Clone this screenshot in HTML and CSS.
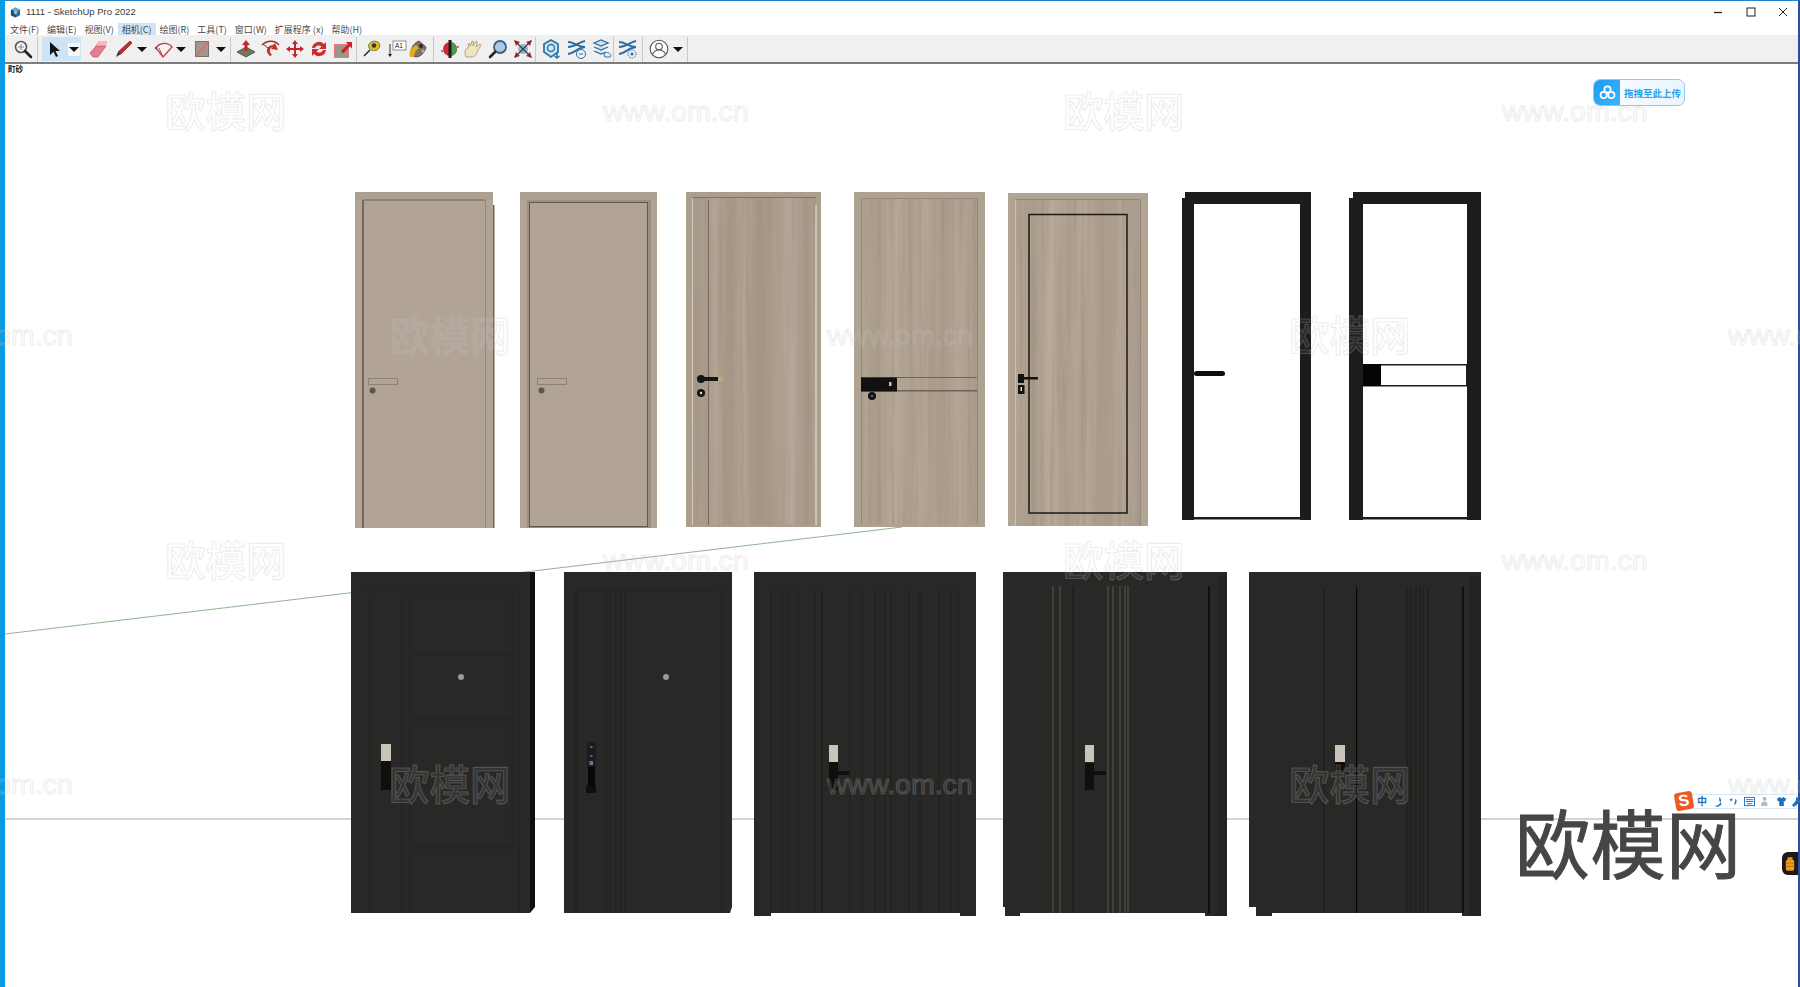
FILE: index.html
```html
<!DOCTYPE html>
<html lang="zh">
<head>
<meta charset="utf-8">
<title>1111 - SketchUp Pro 2022</title>
<link rel="stylesheet" href="styles.css">
</head>
<body>
<div class="window">
  <header class="titlebar">
    <svg class="appicon" viewBox="0 0 12 12"><path d="M6 .5 11 3v6l-5 2.500L1 9V3z" fill="#2f6f9f"/><path d="M6 .5 11 3 6 5.500 1 3z" fill="#6fa8cc"/><path d="M6 5.500V11.500L1 9V3z" fill="#1d4f78"/><circle cx="6" cy="6" r="1.800" fill="#9cc4dd"/></svg>
    <span class="apptitle">1111 - SketchUp Pro 2022</span>
    <div class="winctl">
      <svg class="winbtn" viewBox="0 0 10 10"><path d="M0 5.500h8" stroke="#222" stroke-width="1.300"/></svg>
      <svg class="winbtn" viewBox="0 0 10 10"><rect x="1" y="1" width="8" height="8" fill="none" stroke="#222"/></svg>
      <svg class="winbtn" viewBox="0 0 10 10"><path d="M1 1l8 8M9 1l-8 8" stroke="#222"/></svg>
    </div>
  </header>
  <nav class="menubar">
    <span class="menu">文件(F)</span><span class="menu">编辑(E)</span><span class="menu">视图(V)</span><span class="menu menu-on">相机(C)</span><span class="menu">绘图(R)</span><span class="menu">工具(T)</span><span class="menu">窗口(W)</span><span class="menu">扩展程序 (x)</span><span class="menu">帮助(H)</span>
  </nav>
  <div class="toolbar">
    <svg class="tool ml2" viewBox="0 0 20 20"><circle cx="8" cy="8" r="5.500" fill="#f4f4f4" stroke="#555" stroke-width="1.600"/><path d="M5 8h6M8 5v6" stroke="#888"/><path d="M12 12l6 6" stroke="#222" stroke-width="2.600" stroke-linecap="round"/></svg>
    <i class="sep ml4"></i>
    <div class="selbtn ml4">
      <svg class="tool" viewBox="0 0 20 20"><path d="M6 3v13l3.500-3.200L12 18l2-1-2.500-5H16z" fill="#111"/></svg>
      <span class="caretbox"><i class="caret"></i></span>
    </div>
    <svg class="tool ml8" viewBox="0 0 20 20"><path d="M1 14 10 2h8l-1 5-8 11H4z" fill="#ef8fa0"/><path d="M10 2h8l-1 5H8z" fill="#f7b8c4"/><path d="M1 14 8 7h9L9 18H4z" fill="#e87c92" stroke="#a8586a" stroke-width=".6"/></svg>
    <svg class="tool ml5" viewBox="0 0 20 20"><path d="M16 2l2 2L7 15l-3-2z" fill="#c22b2b" stroke="#7c1c1c" stroke-width=".7"/><path d="M4 13l3 2-5 3z" fill="#333"/></svg>
    <i class="caret ml3"></i>
    <svg class="tool ml7" viewBox="0 0 20 20"><path d="M2 9A10 10 0 0 1 18 8L9 18z" fill="#f8f4f4" stroke="#c23c4a" stroke-width="1.300"/><path d="M5 9 9 18" stroke="#c23c4a"/><circle cx="2" cy="9" r="1.300" fill="#555"/></svg>
    <i class="caret ml2"></i>
    <svg class="tool ml6" viewBox="0 0 20 20"><rect x="3.500" y="2.500" width="13" height="15" fill="#a3978c" stroke="#7e7268"/><path d="M3.500 17.500 16.500 2.500" stroke="#e8606e" stroke-width="1.200"/></svg>
    <i class="caret ml4"></i>
    <i class="sep ml4"></i>
    <svg class="tool ml5" viewBox="0 0 20 20"><path d="M1 13l9-5 9 5-9 5z" fill="#6f7a5e" stroke="#333" stroke-width=".7"/><path d="M10 1l4 5h-2.500v6h-3V6H6z" fill="#c2282e"/></svg>
    <svg class="tool ml5" viewBox="0 0 20 20"><path d="M1 6C6 1 14 1 18 6" fill="none" stroke="#b02a2a" stroke-width="1.500"/><path d="M9 17C4 13 5 7 12 6l2-2 3 7-7-1 2-2C8 9 8 13 11 16z" fill="#c92c2c"/><path d="M2 5l5 4" stroke="#444"/></svg>
    <svg class="tool ml4" viewBox="0 0 20 20"><path d="M10 1l3 4h-2v4h4V7l4 3-4 3v-2h-4v4h2l-3 4-3-4h2v-4H5v2l-4-3 4-3v2h4V5H7z" fill="#c5242c"/></svg>
    <svg class="tool ml4" viewBox="0 0 20 20"><path d="M3 9a7 7 0 0 1 12-4l2-2v7h-7l2.500-2.500A4 4 0 0 0 6 9z" fill="#d02b2e"/><path d="M17 11a7 7 0 0 1-12 4l-2 2v-7h7l-2.500 2.500A4 4 0 0 0 14 11z" fill="#d02b2e"/></svg>
    <svg class="tool ml4" viewBox="0 0 20 20"><rect x="1.500" y="5.500" width="14" height="13" fill="#9a9587" stroke="#e57a84"/><path d="M8 12l7-7-2.500-2H19v6.500l-2-2-7 7z" fill="#c8242c"/></svg>
    <i class="sep ml3"></i>
    <svg class="tool ml5" viewBox="0 0 20 20"><path d="M2 17l6-6" stroke="#222" stroke-width="1.500"/><path d="M7 9a6 5 0 0 1 9-6c3 2 2 6-1 8-3 1-6 1-8-2z" fill="#d9bc2a" stroke="#6a5b10" stroke-width=".7"/><circle cx="12" cy="6.500" r="2.200" fill="#333"/></svg>
    <svg class="tool ml5" viewBox="0 0 20 20"><rect x="6" y="2" width="13" height="9" fill="#fff" stroke="#777" stroke-width=".8"/><text class="a1" x="8" y="9">A1</text><path d="M3 5v12" stroke="#333"/><path d="M1 15h4l-2 3z" fill="#222"/></svg>
    <svg class="tool ml1" viewBox="0 0 20 20"><path d="M4 17C1 12 5 4 11 2l7 6c-1 6-6 10-10 10z" fill="#7d7466" stroke="#3a352c" stroke-width=".7"/><path d="M2 18c-2-5 2-10 6-12l3 3c-3 2-5 6-5 9z" fill="#e5ad1c"/><circle cx="13" cy="7" r="2.200" fill="#3a352c"/><circle cx="15" cy="12" r="1.500" fill="#b7b0a2"/></svg>
    <i class="sep ml5"></i>
    <svg class="tool ml6" viewBox="0 0 20 20"><circle cx="10" cy="10" r="7" fill="#c92c36"/><path d="M10 3a7 7 0 0 1 0 14z" fill="#4d9a4d"/><path d="M10 1v18" stroke="#1d1d1d" stroke-width="3"/><path d="M17 8h2M1 12h2" stroke="#333"/></svg>
    <svg class="tool ml3" viewBox="0 0 20 20"><path d="M3 18C1 13 2 10 5 9l1-5 1.500 3L9 2l1.500.5L10 7l3-5 1.500 1L13 8l4-3 1 1.500L15 11c-1 4-3 7-7 7z" fill="#f0e3c0" stroke="#a39470" stroke-width=".8"/></svg>
    <svg class="tool ml5" viewBox="0 0 20 20"><circle cx="12" cy="8" r="6" fill="#a9cbe6" stroke="#3a5f82" stroke-width="1.800"/><path d="M7 13l-5 5" stroke="#222" stroke-width="2.600" stroke-linecap="round"/></svg>
    <svg class="tool ml5" viewBox="0 0 20 20"><circle cx="10" cy="10" r="5" fill="#8eb3d3"/><path d="M1 1l6 2-4 4zM19 1l-2 6-4-4zM1 19l2-6 4 4zM19 19l-6-2 4-4z" fill="#c5242c"/><path d="M2 2l16 16M18 2 2 18" stroke="#3a3a3a" stroke-width="1.200"/></svg>
    <i class="sep ml2"></i>
    <svg class="tool ml6" viewBox="0 0 20 20"><path d="M9 1l7 4v8l-7 5-7-5V5z" fill="#d5e6f3" stroke="#2f76ad" stroke-width="1.800"/><circle cx="9" cy="9" r="3.500" fill="none" stroke="#2f76ad" stroke-width="1.500"/><path d="M15 13v6M12.500 17l2.500 2 2.500-2" fill="none" stroke="#2f76ad" stroke-width="1.500"/></svg>
    <svg class="tool ml5" viewBox="0 0 20 20"><path d="M1 3c6 0 10 5 17 5M1 15c6 0 8-6 17-7M18 2c-6 1-9 6-17 6" fill="none" stroke="#2a6ea8" stroke-width="2"/><circle cx="14" cy="15" r="4.500" fill="#e9f2f8" stroke="#2a6ea8"/><path d="M12 15h4" stroke="#2a6ea8"/></svg>
    <svg class="tool ml5" viewBox="0 0 20 20"><path d="M2 4l7-3 7 3-7 3zM2 8l7 3 7-3M2 12l7 3 5-2" fill="#cfe2f0" stroke="#2a6ea8" stroke-width="1.300"/><path d="M12 16c0-3 5-3 6-1 1 0 1 3 0 3h-5z" fill="#eef5fa" stroke="#2a6ea8"/></svg>
    <i class="sep ml1"></i>
    <svg class="tool ml4" viewBox="0 0 20 20"><path d="M1 3c6 0 10 5 17 5M1 15c6 0 8-6 17-7M18 2c-6 1-9 6-17 6" fill="none" stroke="#2a6ea8" stroke-width="2"/><circle cx="14" cy="15" r="4" fill="#e9f2f8" stroke="#2a6ea8" stroke-dasharray="1.500 1"/><circle cx="14" cy="15" r="1.500" fill="#2a6ea8"/></svg>
    <i class="sep ml4"></i>
    <svg class="tool ml6" viewBox="0 0 20 20"><circle cx="10" cy="10" r="8.800" fill="#fff" stroke="#555" stroke-width="1.100"/><circle cx="10" cy="7.500" r="3.300" fill="none" stroke="#555" stroke-width="1.100"/><path d="M3.500 15.500c1-3 3.500-4.500 6.500-4.500s5.500 1.500 6.500 4.500" fill="none" stroke="#555" stroke-width="1.100"/></svg>
    <i class="caret ml4"></i>
    <i class="sep ml4"></i>
  </div>
  <main class="canvas">
    <svg class="scene" viewBox="5 64 1793 923" preserveAspectRatio="none">
      <defs>
        <filter id="grain" x="0" y="0" width="100%" height="100%">
          <feTurbulence type="fractalNoise" baseFrequency="0.22 0.004" numOctaves="3" seed="4" result="n"/>
          <feColorMatrix in="n" type="matrix" values="0 0 0 0 .36 0 0 0 0 .29 0 0 0 0 .23 0 0 0 1.700 -.68" result="c"/>
          <feComposite in="c" in2="SourceGraphic" operator="in" result="g"/>
          <feMerge><feMergeNode in="SourceGraphic"/><feMergeNode in="g"/></feMerge>
        </filter>
        <linearGradient id="woodA">
          <stop offset="0" stop-color="#a99b8b"/><stop offset=".13" stop-color="#ab9d8d"/><stop offset=".18" stop-color="#b3a595"/><stop offset=".3" stop-color="#a69787"/><stop offset=".42" stop-color="#b2a494"/><stop offset=".55" stop-color="#a49585"/><stop offset=".68" stop-color="#ad9f8f"/><stop offset=".8" stop-color="#b6a89a"/><stop offset=".92" stop-color="#a69888"/><stop offset="1" stop-color="#ae9f90"/>
        </linearGradient>
        <linearGradient id="woodB">
          <stop offset="0" stop-color="#b3a594"/><stop offset=".15" stop-color="#ab9d8c"/><stop offset=".28" stop-color="#b9ab9b"/><stop offset=".42" stop-color="#aea08f"/><stop offset=".55" stop-color="#b6a898"/><stop offset=".7" stop-color="#ab9c8c"/><stop offset=".85" stop-color="#b4a696"/><stop offset="1" stop-color="#aa9c8c"/>
        </linearGradient>
      </defs>

      <path d="M5 634 902 527" stroke="#8db68d" stroke-width="1" fill="none"/>
      <path d="M5 819H1798" stroke="#b79f9f" stroke-width="1"/>

      <!-- door 1 -->
      <rect x="355" y="192" width="138" height="336" fill="#b1a497"/>
      <rect x="355" y="192" width="138" height="8" fill="#aca092"/>
      <rect x="363" y="199" width="122" height="2" fill="#8d8274"/>
      <rect x="362" y="200" width="2" height="328" fill="#736a5f"/>
      <rect x="485" y="200" width="1" height="328" fill="#94897c"/>
      <rect x="493" y="205" width="1.500" height="323" fill="#6e665c"/>
      <rect x="368.500" y="378.500" width="29" height="6" fill="none" stroke="#8e8376"/>
      <circle cx="372.500" cy="390.500" r="3" fill="#5c5552"/>

      <!-- door 2 -->
      <rect x="520" y="192" width="137" height="336" fill="#b1a497"/>
      <rect x="520" y="192" width="137" height="8" fill="#aca092"/>
      <rect x="527" y="200" width="124" height="328" fill="#9c9082"/>
      <rect x="529.500" y="202.500" width="118" height="324" fill="#b1a497" stroke="#5f574e"/>
      <rect x="537.500" y="378.500" width="29" height="6" fill="none" stroke="#8e8376"/>
      <circle cx="541.500" cy="390.500" r="3" fill="#5c5552"/>

      <!-- door 3 -->
      <rect x="686" y="192" width="135" height="335" fill="#ab9e8e"/>
      <rect x="692" y="198" width="124" height="327" fill="url(#woodA)" filter="url(#grain)"/>
      <rect x="692" y="197" width="124" height="1" fill="#7f7366"/>
      <rect x="692" y="198" width="1" height="327" fill="#d6ccbe"/>
      <rect x="815.500" y="205" width="1" height="320" fill="#f1eadf"/>
      <rect x="708" y="200" width="1" height="325" fill="#75695d"/>
      <circle cx="701" cy="379" r="4" fill="#151515"/>
      <rect x="701" y="377" width="17" height="4" fill="#151515"/>
      <rect x="718" y="377" width="5" height="4" fill="#c9a27a"/>
      <circle cx="701" cy="393" r="4" fill="#151515"/>
      <circle cx="701" cy="393" r="1.200" fill="#ddd"/>

      <!-- door 4 -->
      <rect x="854" y="192" width="131" height="335" fill="#b0a292"/>
      <rect x="861" y="198" width="116" height="327" fill="url(#woodB)" filter="url(#grain)"/>
      <rect x="861" y="198" width="116" height="1" fill="#94887a"/>
      <rect x="861" y="198" width="1" height="327" fill="#94887a"/>
      <rect x="977" y="198" width="1" height="327" fill="#94887a"/>
      <rect x="861" y="377" width="116" height="1" fill="#6e6357"/>
      <rect x="861" y="390" width="116" height="1.500" fill="#6e6357"/>
      <rect x="861" y="377.500" width="36" height="14" fill="#111"/>
      <rect x="889" y="382" width="2.500" height="4" fill="#e2bf7e"/>
      <circle cx="872" cy="396" r="4" fill="#111"/>
      <circle cx="872" cy="396" r="1" fill="#888"/>

      <!-- door 5 -->
      <rect x="1008" y="193" width="140" height="333" fill="#b2a493"/>
      <rect x="1015" y="200" width="126" height="326" fill="url(#woodB)" filter="url(#grain)"/>
      <rect x="1015" y="200" width="1" height="326" fill="#cbbfae"/>
      <rect x="1140" y="200" width="1" height="326" fill="#94887a"/>
      <rect x="1015" y="199" width="126" height="1" fill="#94887a"/>
      <rect x="1029" y="214.500" width="98" height="298.500" fill="none" stroke="#1b1815" stroke-width="1.500"/>
      <rect x="1018" y="374" width="6" height="9" fill="#111"/>
      <rect x="1024" y="377" width="14" height="2.500" fill="#111"/>
      <rect x="1018" y="385" width="6.500" height="9" fill="#111"/>
      <rect x="1020.500" y="387" width="1.500" height="4" fill="#ddd"/>

      <!-- door 6 -->
      <path d="M1185 192H1311V520H1300V204H1194V520H1182V198H1185z" fill="#1c1c1c"/>
      <rect x="1194" y="517" width="106" height="2.500" fill="#1c1c1c"/>
      <rect x="1194" y="371" width="31" height="5" rx="2.500" fill="#0d0d0d"/>

      <!-- door 7 -->
      <path d="M1353 192H1481V520H1467V204H1363V520H1349V198H1353z" fill="#1c1c1c"/>
      <rect x="1363" y="517" width="104" height="2.500" fill="#1c1c1c"/>
      <rect x="1363" y="364" width="104" height="1.500" fill="#1c1c1c"/>
      <rect x="1363" y="385" width="104" height="1.500" fill="#1c1c1c"/>
      <rect x="1466" y="364" width="1.500" height="22" fill="#1c1c1c"/>
      <rect x="1363" y="364" width="18" height="22" fill="#050505"/>

      <!-- door 8 -->
      <rect x="351" y="572" width="179" height="341" fill="#282826"/>
      <path d="M530 572h5v335l-5 6z" fill="#0f0f0f"/>
      <path d="M360 587H519M370 595V913M402 595V913M410 595V913M519 587V913" stroke="#232321" fill="none"/>
      <path d="M410 595H512V652H410M410 655H512V719H410M410 722H512V847H410M410 850H512" stroke="#232321" fill="none"/>
      <circle cx="461" cy="677" r="3" fill="#9a9a98"/>
      <rect x="381" y="744" width="10" height="17" fill="#c9c3b8"/>
      <rect x="381" y="761" width="10" height="29" fill="#0f0f0d"/>

      <!-- door 9 -->
      <path d="M564 572H732V907l-2 6H564z" fill="#282826"/>
      <path d="M576 590V913M606 590V913M610 590V913M615 590V913M621 590V913M625 590V913M722 590V913M576 590H718" stroke="#212120" fill="none"/>
      <circle cx="666" cy="677" r="3" fill="#9a9a98"/>
      <rect x="586" y="785" width="10" height="8" fill="#0f0f0d"/>
      <rect x="587" y="742" width="9" height="25" fill="#1a1c22"/>
      <rect x="588" y="767" width="7" height="19" fill="#060606"/>
      <rect x="590" y="746" width="2.500" height="2" fill="#5a6070"/>
      <rect x="590" y="755" width="2.500" height="2" fill="#5a6070"/>
      <rect x="589.500" y="761" width="3.500" height="4" fill="#707480"/>

      <!-- door 10 -->
      <rect x="754" y="572" width="222" height="344" fill="#282826"/>
      <rect x="771" y="913" width="189" height="3" fill="#fff"/>
      <path d="M771 590V913M782 590V913M788 590V913M798 590V913M815 590V913M850 590V913M862 590V913M875 590V913M885 590V913M891 590V913M909 590V913M920 590V913M939 590V913M951 590V913M958 590V913" stroke="#1e1e1d" fill="none"/>
      <path d="M822 590V913" stroke="#1a1a19" stroke-width="1.200"/>
      <rect x="829" y="745" width="9" height="17" fill="#c9c3b8"/>
      <rect x="829" y="762" width="9" height="28" fill="#0f0f0d"/>
      <rect x="838" y="771" width="11" height="4" fill="#0f0f0d"/>

      <!-- door 11 -->
      <rect x="1003" y="572" width="224" height="344" fill="#282826"/>
      <path d="M1003 907h2v9h-2z" fill="#fff"/>
      <rect x="1020" y="913" width="185" height="3" fill="#fff"/>
      <rect x="1217" y="575" width="10" height="341" fill="#232321"/>
      <path d="M1053 586V913M1060 586V913M1108 586V913M1113 586V913M1120 586V913M1125 586V913M1128 586V913" stroke="#5a5750" fill="none"/>
      <path d="M1073 586V913" stroke="#1a1a19" stroke-width="1.200"/>
      <rect x="1208" y="586" width="2" height="327" fill="#0f0f0f"/>
      <rect x="1085" y="745" width="9" height="17" fill="#c9c3b8"/>
      <rect x="1085" y="763" width="9" height="27" fill="#0f0f0d"/>
      <rect x="1094" y="771" width="12" height="4" fill="#0f0f0d"/>

      <!-- door 12 -->
      <rect x="1249" y="572" width="232" height="344" fill="#282826"/>
      <path d="M1249 907h7v9h-7z" fill="#fff"/>
      <rect x="1272" y="913" width="190" height="3" fill="#fff"/>
      <rect x="1469" y="575" width="12" height="341" fill="#232321"/>
      <rect x="1356" y="587" width="1.200" height="326" fill="#080808"/>
      <path d="M1324 587V913M1407 587V913M1411 587V913M1416 587V913M1420 587V913M1423 587V913M1428 587V913" stroke="#1b1b1a" fill="none"/>
      <rect x="1462" y="587" width="2" height="326" fill="#101010"/>
      <rect x="1335" y="745" width="10" height="17" fill="#c9c3b8"/>
      <rect x="1335" y="762" width="10" height="8" fill="#0f0f0d"/>
    </svg>
    <span class="scenetag">町砂</span>
    <div class="upload">
      <span class="upload-ico">
        <svg viewBox="0 0 20 20" class="upload-svg"><circle cx="10" cy="6.500" r="3.700" fill="none" stroke="#fff" stroke-width="2"/><circle cx="5.500" cy="13" r="3.700" fill="none" stroke="#fff" stroke-width="2"/><circle cx="14.500" cy="13" r="3.700" fill="none" stroke="#fff" stroke-width="2"/></svg>
      </span>
      <span class="upload-txt">拖拽至此上传</span>
    </div>
  </main>
</div>

<div class="wm-layer">
  <span class="wm cn r1 a1c">欧模网</span><span class="wm url r1 a2c">www.om.cn</span><span class="wm cn r1 a3c">欧模网</span><span class="wm url r1 a4c">www.om.cn</span>
  <span class="wm url r2 b0c">www.om.cn</span><span class="wm cn r2 b1c">欧模网</span><span class="wm url r2 b2c">www.om.cn</span><span class="wm cn r2 b3c">欧模网</span><span class="wm url r2 b4c">www.om.cn</span>
  <span class="wm cn r3 a1c">欧模网</span><span class="wm url r3 a2c">www.om.cn</span><span class="wm cn r3 a3c">欧模网</span><span class="wm url r3 a4c">www.om.cn</span>
  <span class="wm url r4 b0c">www.om.cn</span><span class="wm cn r4 b1c">欧模网</span><span class="wm url r4 b2c">www.om.cn</span><span class="wm cn r4 b3c">欧模网</span><span class="wm url r4 b4c">www.om.cn</span>
</div>

<div class="brand">欧模网</div>

<div class="ime">
  <span class="ime-s">S</span>
  <div class="ime-bar">
    <span class="ime-zh">中</span>
    <svg class="ime-ico" viewBox="0 0 12 12"><path d="M8 1a5.500 5.500 0 0 1-6 9 5.500 5.500 0 0 0 9-2C10 8.500 7 6 8 1z" fill="#1f6fc0"/></svg>
    <svg class="ime-ico" viewBox="0 0 12 12"><circle cx="3.500" cy="4" r="1.300" fill="#1f6fc0"/><path d="M8 3c2 1 2 5-1 7 0-2 1-4 1-7z" fill="#1f6fc0"/></svg>
    <svg class="ime-ico" viewBox="0 0 12 12"><rect x=".5" y="1.500" width="11" height="9" fill="none" stroke="#1f6fc0"/><path d="M2 4h8M2 6h8M3 8.500h6" stroke="#1f6fc0"/></svg>
    <svg class="ime-ico" viewBox="0 0 12 12"><circle cx="5" cy="3" r="2.200" fill="#b6b9bd"/><path d="M1 11c0-4 2-5 4-5s3 1 3 2v3z" fill="#b6b9bd"/></svg>
    <svg class="ime-ico" viewBox="0 0 12 12"><path d="M4 1 1 3l1 3 1.500-.5V11h5V5.500L10 6l1-3-3-2-2 1.500z" fill="#1f6fc0"/></svg>
    <svg class="ime-ico" viewBox="0 0 12 12"><path d="M11 2 8.500 4.500 7.500 4 8 1.500C6 0 3.500 2 4.500 4.500L0 10l2 2 5.500-4.500C10 8 12 5.500 11 2z" fill="#1f6fc0"/></svg>
  </div>
</div>

<div class="orangebox">
  <svg class="orangeico" viewBox="0 0 12 16"><rect x="3" y="0" width="6" height="3" fill="#f39a1d"/><rect x="1" y="3" width="10" height="13" rx="2" fill="#f39a1d"/><path d="M1 7h10M1 11h10" stroke="#b76e0c"/></svg>
</div>
</body>
</html>
```
FILE: styles.css
```css
* { box-sizing: border-box; }
html, body { margin: 0; padding: 0; width: 1800px; height: 987px; overflow: hidden; background: #fff; }
body { position: relative; font-family: "Noto Sans CJK SC", "Noto Sans", sans-serif; color: #333; }

.window {
  width: 1800px; height: 987px; display: flex; flex-direction: column;
  border-top: 1px solid #1c86cf; border-left: 5px solid #0a9ce2; border-right: 2px solid #2c4c9c;
  background: #fff;
}

.titlebar { height: 22px; display: flex; align-items: center; padding-left: 5px; background: #fff; }
.appicon { width: 11px; height: 11px; margin-right: 5px; }
.apptitle { font: 9.500px/14px "Liberation Sans", sans-serif; color: #3c3c3c; }
.winctl { margin-left: auto; display: flex; align-items: center; gap: 22px; padding-right: 10px; }
.winbtn { width: 10px; height: 10px; display: block; }

.menubar { height: 12px; display: flex; align-items: center; background: #fff; }
.menu { height: 13px; padding: 0 4px; font-size: 9px; line-height: 13px; color: #4a4a4a; white-space: nowrap; }
.menu:first-child { padding-left: 5px; }
.menu-on { background: #cfe5f7; }

.toolbar { height: 29px; display: flex; align-items: center; padding: 1px 0 0 6px; background: #f0f0f0; border-bottom: 2px solid #7d7d7d; }
.tool { width: 20px; height: 20px; flex: none; display: block; }
.a1 { font: 6.500px "Liberation Sans", sans-serif; fill: #222; }
.sep { width: 1px; height: 25px; background: #c8c8c8; flex: none; }
.caret { width: 0; height: 0; flex: none; border-left: 5px solid transparent; border-right: 5px solid transparent; border-top: 5px solid #111; }
.selbtn { width: 39px; height: 24px; display: flex; align-items: center; padding-left: 2px; background: #cde4f6; flex: none; }
.caretbox { width: 12px; height: 13px; margin-left: 4px; background: #f4f8fb; display: flex; align-items: center; justify-content: center; }
.ml1 { margin-left: 1px; } .ml2 { margin-left: 2px; } .ml3 { margin-left: 3px; } .ml4 { margin-left: 4px; }
.ml5 { margin-left: 5px; } .ml6 { margin-left: 6px; } .ml7 { margin-left: 7px; } .ml8 { margin-left: 8px; }

.canvas { flex: 1; position: relative; background: #fff; }
.scene { width: 100%; height: 100%; display: block; }
.scenetag { position: absolute; left: 3px; top: 0; font-size: 7.500px; line-height: 10px; font-weight: 700; color: #111; }

.upload {
  position: absolute; left: 1588px; top: 15px; width: 92px; height: 27px; display: flex; align-items: center;
  border: 1px solid #8ccbf0; border-radius: 7px; background: linear-gradient(90deg, #f9fdff, #e9f6fe); overflow: hidden;
}
.upload-ico { width: 26px; height: 100%; display: flex; align-items: center; justify-content: center; background: linear-gradient(135deg, #1e9cf5, #3cb4fa); flex: none; }
.upload-svg { width: 17px; height: 17px; }
.upload-txt { margin-left: 4px; font-size: 9.500px; font-weight: 700; color: #2a9ee6; white-space: nowrap; }

.wm-layer { position: absolute; inset: 0; pointer-events: none; overflow: hidden; }
.wm { position: absolute; line-height: 38px; white-space: nowrap; color: rgba(255, 255, 255, .08); -webkit-text-stroke: 1.200px rgba(185, 185, 185, .25); }
.cn { font-family: "Noto Sans CJK SC", sans-serif; font-size: 40.500px; font-weight: 500; margin: -2px 0 0 -2px; }
.url { font-family: "Liberation Sans", sans-serif; font-size: 28.500px; margin-top: -1px; }
.r1 { top: 93px; } .r2 { top: 317px; } .r3 { top: 542px; } .r4 { top: 766px; }
.a1c { left: 167px; } .a2c { left: 603px; } .a3c { left: 1065px; } .a4c { left: 1502px; }
.b0c { left: -73px; } .b1c { left: 391px; } .b2c { left: 827px; } .b3c { left: 1291px; } .b4c { left: 1728px; }

.brand {
  position: absolute; left: 1515px; top: 786px; font-family: "Noto Sans CJK SC", sans-serif; font-size: 75px; line-height: 110px;
  font-weight: 400; color: #464646; white-space: nowrap; letter-spacing: .5px; -webkit-text-stroke: 1px #464646;
}

.ime { position: absolute; left: 1675px; top: 792px; display: flex; align-items: center; }
.ime-s {
  width: 18px; height: 18px; background: #ee5a24; border-radius: 3px; transform: rotate(-10deg); color: #fff; font: 700 16px/18px "Liberation Sans", sans-serif;
  text-align: center; position: relative; z-index: 1;
}
.ime-bar { width: 105px; height: 15px; display: flex; align-items: center; gap: 5px; padding-left: 4px; margin-left: -1px; background: #fff; border: 1px solid #d7e6f3; }
.ime-zh { width: 11px; font-size: 10px; line-height: 12px; font-weight: 700; color: #1f6fc0; }
.ime-ico { width: 11px; height: 11px; flex: none; }

.orangebox { position: absolute; left: 1782px; top: 852px; width: 16px; height: 23px; background: #1a1a1a; border-radius: 6px 0 0 6px; display: flex; align-items: center; justify-content: center; }
.orangeico { width: 10px; height: 14px; }
```
